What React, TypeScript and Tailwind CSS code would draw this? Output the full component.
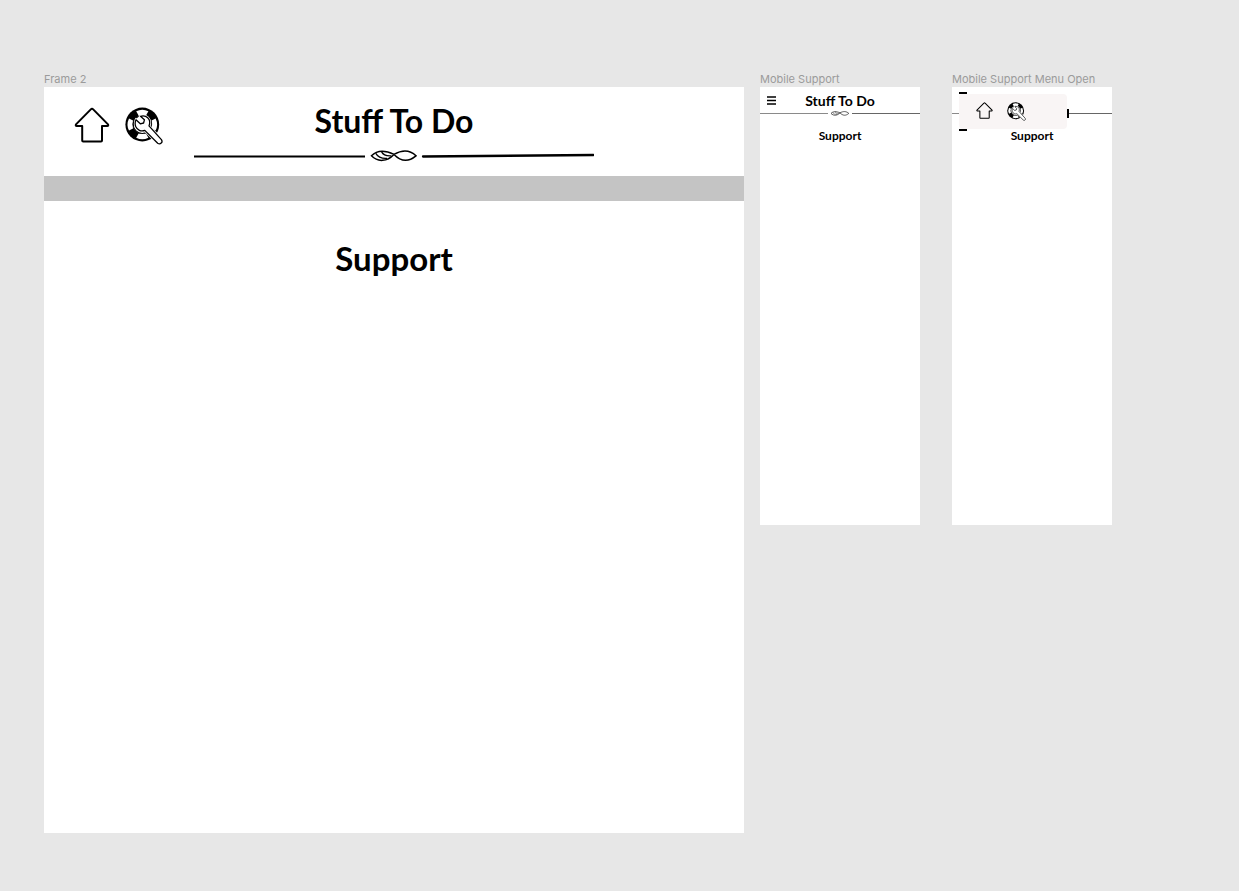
import type { ReactNode } from "react";

function HomeIcon({ className, weight }: { className: string; weight: number }) {
  return (
    <svg viewBox="0 0 36 36" className={className} aria-hidden="true">
      <path
        d="M16.8 2.4Q18 1 19.2 2.4L34 17.4Q34.8 18.8 33.2 19H28V33.4Q28 34.4 27 34.4H9.2Q8.2 34.4 8.2 33.4V19H2.8Q1.2 18.8 2 17.4Z"
        fill="none"
        stroke="#000"
        strokeWidth={weight}
        strokeLinejoin="round"
      />
    </svg>
  );
}

const wrench =
  "M11 12.8 15.3 16.8 18.6 16 19.4 12.8 15.5 9.3C19 8 22.7 9.5 24.2 12.8 25 14.9 24.8 17 24 18.9L36.4 32.6C38.2 35.3 35.3 38 32.7 36.2L19.8 23.4C16 24.8 12.2 23 10.7 19.5 9.9 17.2 10 14.8 11 12.8Z";

function SupportIcon({ className }: { className: string }) {
  return (
    <svg viewBox="0 0 38 38" className={className} aria-hidden="true">
      <circle cx="17.3" cy="17.5" r="16.9" fill="#000" />
      <g fill="#fff">
        <path d="M11.2 4.2Q17.3 1.2 23.4 4.2L21 8.6Q17.3 7.2 13.6 8.6Z" />
        <path d="M11.2 30.8Q17.3 33.8 23.4 30.8L21 26.4Q17.3 27.8 13.6 26.4Z" />
        <path d="M4 11.4Q1 17.5 4 23.6L8 21.4Q6.8 17.5 8 13.6Z" />
        <path d="M30.6 11.4Q33.6 17.5 30.6 23.6L26.6 21.4Q27.8 17.5 26.6 13.6Z" />
        <circle cx="17.3" cy="17.5" r="9.3" />
      </g>
      <circle cx="17.3" cy="17.5" r="9" fill="none" stroke="#000" strokeWidth="1.2" />
      <path d={wrench} fill="#fff" stroke="#fff" strokeWidth="2.6" />
      <path d={wrench} fill="#fff" stroke="#000" strokeWidth="1.3" strokeLinejoin="round" />
    </svg>
  );
}

function Knot() {
  return (
    <>
      <path d="M177.5 5.8C183 .2 191 .2 200 4.4C208 -.2 216 0 222 5.8C214 12.4 207 11.6 200 4.4C193 11.6 184 12.6 177.5 5.8Z" />
      <path d="M181.8 3.4Q185 9 193 8.4M187.6 1.9Q190 6.4 197.4 5.8" strokeWidth="1.3" />
    </>
  );
}

function Flourish({ className }: { className: string }) {
  return (
    <svg viewBox="0 0 400 12" className={className} aria-hidden="true">
      <g fill="none" stroke="#000" strokeWidth="1.5">
        <path d="M0 6.5H171" strokeWidth="2" />
        <path d="M229 6.5 399.5 5" strokeWidth="2.3" strokeLinecap="round" />
        <Knot />
      </g>
    </svg>
  );
}

function Artboard({ label, className, children }: { label: string; className: string; children: ReactNode }) {
  return (
    <section className="min-w-0">
      <p className="h-4 whitespace-nowrap font-['Inter',sans-serif] text-[11px] leading-4 font-normal text-[#9b9b9b]">{label}</p>
      <div className={`bg-white ${className}`}>{children}</div>
    </section>
  );
}

export default function App() {
  return (
    <main className="min-h-screen bg-[#e7e7e7] pt-[71px] pr-[127px] pb-14 pl-11 font-['Lato',sans-serif] font-bold text-black">
      <div className="grid grid-cols-[716fr_192fr_160fr] items-start">
        <Artboard label="Frame 2" className="mr-4 min-h-[746px]">
          <header className="grid h-[89px] grid-cols-[3fr_8fr_3fr]">
            <nav className="flex gap-[15px] pt-5 pl-[30px]">
              <a href="#home" aria-label="Home"><HomeIcon className="size-9" weight={2} /></a>
              <a href="#support" aria-label="Support"><SupportIcon className="size-[38px]" /></a>
            </nav>
            <div className="pt-[13px] text-center">
              <h1 className="text-[32px] leading-[42px] whitespace-nowrap">Stuff To Do</h1>
              <Flourish className="mt-2 w-full" />
            </div>
          </header>
          <div className="h-[25px] bg-[#c4c4c4]" />
          <h2 className="pt-9 text-center text-[33px] leading-[42px]">Support</h2>
        </Artboard>

        <Artboard label="Mobile Support" className="mr-8 min-h-[438px]">
          <header>
            <div className="grid h-6 grid-cols-[1fr_auto_1fr] items-center pt-[3px]">
              <button type="button" aria-label="Open menu" className="ml-[7px] w-[9px]">
                <svg viewBox="0 0 9 9" className="size-[9px]" aria-hidden="true">
                  <path d="M0 1H9M0 4.5H9M0 8H9" stroke="#000" strokeWidth="1.5" />
                </svg>
              </button>
              <h1 className="text-[14px] leading-5 whitespace-nowrap">Stuff To Do</h1>
            </div>
            <div className="flex h-[5px] items-center">
              <span className="h-px flex-1 bg-[#8a8a8a]" />
              <svg viewBox="175 0 50 12" className="mx-[2px] h-[5px] w-5" aria-hidden="true">
                <g fill="none" stroke="#222" strokeWidth="1.8">
                  <Knot />
                </g>
              </svg>
              <span className="h-px flex-1 bg-[#666666]" />
            </div>
          </header>
          <h2 className="pt-3 text-center text-[12px] leading-4">Support</h2>
        </Artboard>

        <Artboard label="Mobile Support Menu Open" className="min-h-[438px]">
          <header className="flex h-[43px] items-start pt-[5px]">
            <span className="mt-[21px] h-px w-[7px] bg-[#8a8a8a]" />
            <div className="flex w-[108px] flex-col">
              <span className="h-[2px] w-2 bg-black" />
              <nav className="flex h-[35px] gap-3.5 rounded-[4px] bg-[#f9f5f5] pt-2 pl-[17px]">
                <a href="#home" aria-label="Home" className="size-[17px]"><HomeIcon className="size-[17px]" weight={2.2} /></a>
                <a href="#support" aria-label="Support" className="size-[19px]"><SupportIcon className="size-[19px]" /></a>
              </nav>
              <span className="h-[2px] w-2 bg-black" />
            </div>
            <span className="mt-[17px] h-[9px] w-[2px] bg-black" />
            <span className="mt-[21px] h-px flex-1 bg-[#666666]" />
          </header>
          <h2 className="text-center text-[12px] leading-3">Support</h2>
        </Artboard>
      </div>
    </main>
  );
}
